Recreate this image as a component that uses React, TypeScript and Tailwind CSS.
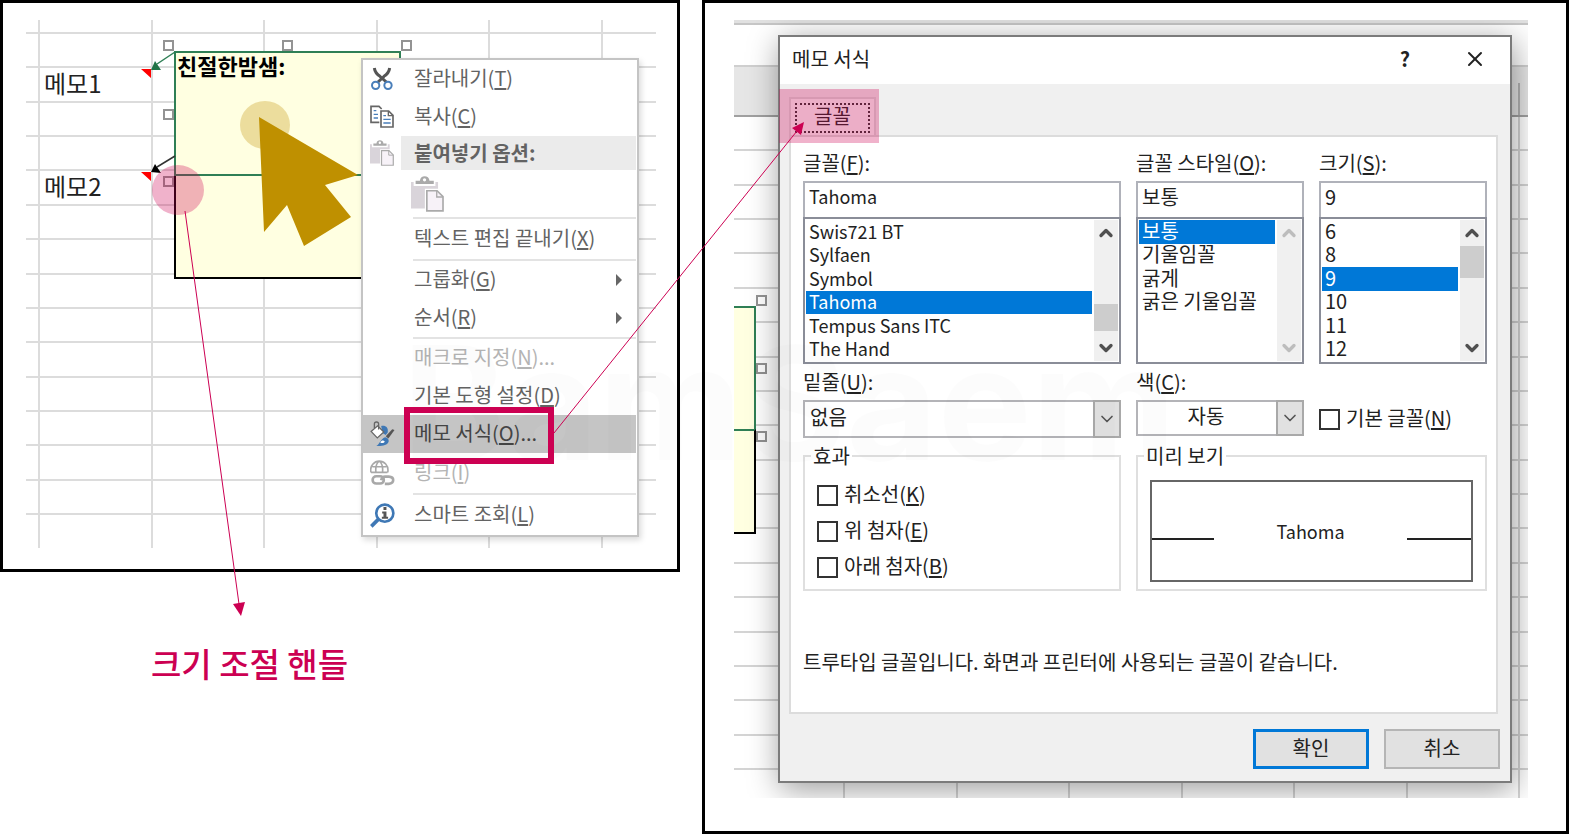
import type { ReactNode } from "react"
import { ChevronDown, ChevronUp, X } from "lucide-react"
import { clsx } from "clsx"

type MenuEntry = {
  label: string
  hotkey: string
  suffix?: string
  icon?: ReactNode
  disabled?: boolean
  active?: boolean
  submenu?: boolean
  tall?: boolean
}

const FONTS = ["Swis721 BT", "Sylfaen", "Symbol", "Tahoma", "Tempus Sans ITC", "The Hand"]
const STYLES = ["보통", "기울임꼴", "굵게", "굵은 기울임꼴"]
const SIZES = ["6", "8", "9", "10", "11", "12"]

function ScissorsIcon() {
  return (
    <svg viewBox="0 0 72 72" className="size-6" fill="none">
      <path d="M13 3c2 14 9 20 17 25l19 17M59 3c-2 14-9 20-17 25L24 45" stroke="#555" strokeWidth="9" />
      <circle cx="17" cy="55" r="11" stroke="#4a7fba" strokeWidth="6" />
      <circle cx="54" cy="55" r="11" stroke="#4a7fba" strokeWidth="6" />
    </svg>
  )
}

function CopyIcon() {
  return (
    <svg viewBox="0 0 72 72" className="size-6" fill="none">
      <path d="M28 52H3V4h24l8 8" stroke="#666" strokeWidth="5" />
      <path d="M11 17h8M11 28h13M11 39h13" stroke="#4a7fba" strokeWidth="4" />
      <path d="M33 18h23l13 13v35H33z" fill="#fff" stroke="#666" strokeWidth="5" />
      <path d="M55 18v14h14" stroke="#666" strokeWidth="4" />
      <path d="M40 32h8M40 43h22M40 54h22" stroke="#4a7fba" strokeWidth="4" />
    </svg>
  )
}

function PasteIcon({ className }: { className: string }) {
  return (
    <svg viewBox="0 0 100 108" className={className} fill="none">
      <path d="M0 18h8v12h66V18h8v80H0z" fill="#d9d4da" />
      <path d="M14 24V14h13C28-4 55-4 56 14h13v10z" fill="#aaa" />
      <circle cx="41" cy="11" r="5" fill="#fff" />
      <path d="M42 38h42l16 18v52H42z" fill="#fff" />
      <path d="M48 44h31l18 18v43H48z" fill="#f7f2f8" stroke="#aaa" strokeWidth="5" />
      <path d="M78 44v19h19" stroke="#aaa" strokeWidth="4" />
    </svg>
  )
}

function FormatIcon() {
  return (
    <svg viewBox="0 0 76 80" className="h-[26px] w-[25px]" fill="none">
      <path d="M34 15c16-2 22 6 20 20l-6 8-10-6z" fill="#3f78b5" />
      <path d="M75 28 56 54l-8-7 20-22z" fill="#555" />
      <path d="M46 50c8 2 12 6 11 13-4 12-20 15-38 14 10-5 12-21 27-27z" fill="#3f78b5" />
      <path d="m3 32 20-17 19 19-20 18z" fill="#fff" stroke="#666" strokeWidth="4" />
      <path d="M13 22V9c0-8 13-8 13 0v17" stroke="#666" strokeWidth="4" />
      <path d="M31 66c4-7 10-8 14-3-3 6-9 6-14 3z" fill="#fff" />
    </svg>
  )
}

function LinkIcon() {
  return (
    <svg viewBox="0 0 76 78" className="h-[26px] w-[25px]" fill="none" stroke="#a8a8a8" strokeWidth="5">
      <path d="M3 37C-2 17 14 3 28 3s30 12 26 34M3 37h50M7 20h43M18 37C16 20 20 9 28 3c8 6 12 17 10 34" />
      <rect x="8" y="49" width="34" height="22" rx="11" strokeWidth="8" />
      <path d="M34 61c2-8 6-11 12-11h11c18 1 18 20 0 22H45" strokeWidth="8" />
    </svg>
  )
}

function LookupIcon() {
  return (
    <svg viewBox="0 0 76 76" className="size-[25px]" fill="none">
      <path d="M26 49 4 71" stroke="#3f78b5" strokeWidth="11" />
      <circle cx="45" cy="31" r="26" fill="#fff" stroke="#3f78b5" strokeWidth="8" />
      <path d="M41 12h9v9h-9zM37 26h13v16h5v6H36v-6h5V32h-4z" fill="#555" />
    </svg>
  )
}

function MenuItem({ label, hotkey, suffix, icon, disabled, active, submenu, tall }: MenuEntry) {
  return (
    <button
      type="button"
      role="menuitem"
      disabled={disabled}
      className={clsx(
        "flex w-full items-center text-left",
        tall ? "h-10" : "h-[38px]",
        active ? "bg-[#c5c5c5] text-[#444]" : disabled ? "text-[#b4b4b4]" : "text-[#636363]"
      )}
    >
      <span className="flex w-[38px] shrink-0 justify-center">{icon}</span>
      <span className="flex-1 pb-[2px] pl-[13px] whitespace-nowrap">
        {label}(<u className="underline-offset-2">{hotkey}</u>){suffix}
      </span>
      {submenu && (
        <svg viewBox="0 0 6 12" className="mr-[14px] h-3 w-[6px]">
          <path d="M0 0l6 6-6 6z" fill="#666" />
        </svg>
      )}
    </button>
  )
}

function MenuLine() {
  return <hr className="ml-[50px] h-[2px] border-0 bg-[#e3e3e3]" />
}

function ContextMenu() {
  return (
    <div
      role="menu"
      className="absolute top-[38px] left-[335px] w-[278px] border-2 border-[#c4c4c4] bg-white pr-px text-xl leading-6 shadow-[2px_3px_6px_rgba(0,0,0,0.15)]"
    >
      <MenuItem label="잘라내기" hotkey="T" icon={<ScissorsIcon />} />
      <MenuItem label="복사" hotkey="C" icon={<CopyIcon />} />
      <div className="flex h-[34px] items-center text-[#636363]">
        <span className="flex w-[38px] justify-center">
          <PasteIcon className="h-[26px] w-6" />
        </span>
        <span className="flex h-full flex-1 items-center bg-[#ebebeb] pl-[13px] font-bold">붙여넣기 옵션:</span>
      </div>
      <div className="flex h-[47px] items-center pl-12">
        <button type="button" disabled aria-label="붙여넣기">
          <PasteIcon className="h-9 w-[33px]" />
        </button>
      </div>
      <MenuLine />
      <MenuItem label="텍스트 편집 끝내기" hotkey="X" tall />
      <MenuLine />
      <MenuItem label="그룹화" hotkey="G" submenu />
      <MenuItem label="순서" hotkey="R" submenu />
      <MenuLine />
      <MenuItem label="매크로 지정" hotkey="N" suffix="..." disabled />
      <MenuItem label="기본 도형 설정" hotkey="D" />
      <MenuItem label="메모 서식" hotkey="O" suffix="..." icon={<FormatIcon />} active />
      <MenuItem label="링크" hotkey="I" icon={<LinkIcon />} disabled tall />
      <MenuLine />
      <MenuItem label="스마트 조회" hotkey="L" icon={<LookupIcon />} tall />
    </div>
  )
}

function Handle({ className }: { className: string }) {
  return <span className={clsx("absolute size-[11px] border-2 border-[#939393] bg-white", className)} />
}

function LeftSheet() {
  const texts: Record<number, string> = { 15: "메모1", 36: "메모2" }
  return (
    <div className="relative h-[528px]">
      <div className="grid h-full grid-cols-[14px_repeat(5,1fr)_53px] grid-rows-[14px_repeat(14,1fr)_33px]">
        {Array.from({ length: 112 }).map((_, i) => (
          <div
            key={i}
            className={clsx(
              "flex min-h-0 items-center border-[#dcdcdc] pb-1 pl-1 text-2xl leading-6 text-[#222]",
              i % 7 !== 6 && "border-r-2",
              i < 105 && "border-b-2"
            )}
          >
            {texts[i]}
          </div>
        ))}
      </div>

      <div className="absolute top-[135px] left-[148px] h-[124px] w-[227px] border-2 border-black bg-[#ffffe1]" />
      <div className="absolute top-[31px] left-[148px] h-[125px] w-[227px] border-2 border-[#2f7f55] bg-[#ffffe1] pl-px text-[22px] leading-6 font-bold text-black">
        친절한밤샘:
      </div>
      <Handle className="top-5 left-[137px]" />
      <Handle className="top-5 left-[256px]" />
      <Handle className="top-5 left-[375px]" />
      <Handle className="top-[89px] left-[137px]" />
      <Handle className="top-[156px] left-[137px]" />
      <ContextMenu />
    </div>
  )
}

function RightSheet() {
  return (
    <div className="absolute inset-0">
      <div className="flex h-full flex-col">
        <div className="h-[5px] border-b-2 border-[#c6c6c6] bg-[#e1e1e1]" />
        <div className="h-[42px] border-b-2 border-[#cfcfcf]" />
        <div className="flex h-[50px] justify-end border-b-2 border-[#a0a0a0] bg-[#e6e6e6] pt-4">
          <div className="w-[10px] border-l-2 border-[#b4b4b4]" />
        </div>
        <div className="grid flex-1 grid-cols-[111px_repeat(6,1fr)_8px] grid-rows-[repeat(19,1fr)_28px]">
          {Array.from({ length: 160 }).map((_, i) => (
            <div
              key={i}
              className={clsx(
                "min-h-0 border-[#d4d4d4]",
                i % 8 > 0 && i % 8 < 7 && "border-r-2",
                i % 8 === 0 && i > 151 && "border-r-2",
                i < 152 && "border-b-2"
              )}
            />
          ))}
        </div>
      </div>
      <div className="absolute top-[286px] left-0 h-[124px] w-[22px] border-t-2 border-r-2 border-[#2f7f55] bg-[#ffffe1]" />
      <div className="absolute top-[409px] left-0 h-[105px] w-[22px] border-t-2 border-r-2 border-b-2 border-black border-t-[#2f7f55] bg-[#ffffe1]" />
      <Handle className="top-[275px] left-[22px]" />
      <Handle className="top-[343px] left-[22px]" />
      <Handle className="top-[411px] left-[22px]" />
    </div>
  )
}

type PickListProps = {
  id: string
  label: string
  hotkey: string
  options: string[]
  value: string
  thumb?: string
  latin?: boolean
}

function PickList({ id, label, hotkey, options, value, thumb, latin }: PickListProps) {
  const arrow = clsx("size-5", thumb ? "text-[#505050]" : "text-[#bdbdbd]")
  return (
    <div className="min-w-0">
      <label htmlFor={id} className="block h-[30px]">
        {label}(<u className="underline-offset-2">{hotkey}</u>):
      </label>
      <input
        id={id}
        defaultValue={value}
        className={clsx(
          "block h-9 w-full border-2 border-b-0 border-[#b0b2ba] bg-white px-1 pb-2 outline-none",
          latin && "text-lg"
        )}
      />
      <div className="flex h-[147px] border-2 border-[#8a8d98] bg-white p-px">
        <ul role="listbox" aria-label={label} className={clsx("flex flex-1 flex-col", latin && "text-lg")}>
          {options.map((option) => (
            <li
              key={option}
              role="option"
              aria-selected={option === value}
              className={clsx(
                "flex h-1/6 items-center pb-[2px] pl-[3px] leading-5 whitespace-nowrap",
                option === value && "bg-[#0078d7] text-white"
              )}
            >
              {option}
            </li>
          ))}
        </ul>
        <div className="ml-[2px] flex w-6 flex-col items-center bg-[#f0f0f0]">
          <button type="button" aria-label="위로" className="flex h-[26px] items-center">
            <ChevronUp className={arrow} strokeWidth={4} />
          </button>
          <div className="flex w-full flex-1 flex-col">
            {thumb && <div className={clsx("w-full bg-[#cdcdcd]", thumb)} />}
          </div>
          <button type="button" aria-label="아래로" className="flex h-[26px] items-center">
            <ChevronDown className={arrow} strokeWidth={4} />
          </button>
        </div>
      </div>
    </div>
  )
}

type ComboProps = { id: string; label: string; hotkey: string; value: string; center?: boolean }

function Combo({ id, label, hotkey, value, center }: ComboProps) {
  return (
    <div className="min-w-0">
      <label htmlFor={id} className="block h-[30px]">
        {label}(<u className="underline-offset-2">{hotkey}</u>):
      </label>
      <div className="relative">
        <select
          id={id}
          className={clsx(
            "block w-full appearance-none border-2 border-[#b4b4b8] bg-white pb-1 outline-none",
            center ? "h-9 pr-7 text-center" : "h-[38px] pl-[5px]"
          )}
        >
          <option>{value}</option>
        </select>
        <span className="pointer-events-none absolute inset-y-0 right-0 flex w-7 items-center justify-center border-2 border-[#a9a9a9] bg-[#e1e1e1]">
          <ChevronDown className="size-5 text-[#555]" strokeWidth={2} />
        </span>
      </div>
    </div>
  )
}

function Check({ label, hotkey }: { label: string; hotkey: string }) {
  return (
    <label className="flex h-9 items-center gap-[6px] whitespace-nowrap">
      <input type="checkbox" className="size-[21px] shrink-0 appearance-none border-2 border-[#333] bg-white" />
      <span className="pb-[2px]">
        {label}(<u className="underline-offset-2">{hotkey}</u>)
      </span>
    </label>
  )
}

function FormatDialog() {
  return (
    <div
      role="dialog"
      aria-label="메모 서식"
      className="relative mt-[15px] mr-4 mb-[15px] ml-11 flex flex-1 flex-col border-2 border-[#7b7b7b] bg-[#f0f0f0] text-xl leading-6 text-[#222] shadow-[2px_6px_30px_rgba(0,0,0,0.4)]"
    >
      <header className="flex h-[47px] items-center justify-between bg-white pr-[23px] pb-1 pl-3">
        <h2>메모 서식</h2>
        <div className="flex items-center gap-[53px]">
          <button type="button" aria-label="도움말" className="font-bold">
            ?
          </button>
          <button type="button" aria-label="닫기">
            <X className="size-6" strokeWidth={2} />
          </button>
        </div>
      </header>

      <div role="tablist" className="mt-[13px] flex pl-[9px]">
        <button
          type="button"
          role="tab"
          aria-selected
          className="h-[38px] w-[87px] border-2 border-b-0 border-[#dcdcdc] bg-[#f9f9f9] px-1 pt-1 pb-[5px]"
        >
          <span className="flex h-[30px] items-center justify-center border-2 border-dotted border-[#333] pb-1">
            글꼴
          </span>
        </button>
      </div>

      <form className="mx-[9px] mr-3 flex h-[579px] flex-col border-2 border-[#dcdcdc] bg-white pt-[14px] pr-[9px] pl-3">
        <div className="grid grid-cols-[318fr_168fr_168fr] gap-[15px]">
          <PickList
            id="font"
            label="글꼴"
            hotkey="F"
            options={FONTS}
            value="Tahoma"
            thumb="mt-auto mb-1 h-[27px]"
            latin
          />
          <PickList id="style" label="글꼴 스타일" hotkey="O" options={STYLES} value="보통" />
          <PickList id="size" label="크기" hotkey="S" options={SIZES} value="9" thumb="h-8" />
        </div>
        <div className="mt-[6px] grid grid-cols-[318fr_168fr_168fr] gap-[15px]">
          <Combo id="underline" label="밑줄" hotkey="U" value="없음" />
          <Combo id="color" label="색" hotkey="C" value="자동" center />
          <div className="pt-[31px]">
            <Check label="기본 글꼴" hotkey="N" />
          </div>
        </div>
        <div className="mt-[6px] grid grid-cols-[318fr_351fr] gap-[15px]">
          <fieldset className="h-[147px] border-2 border-[#dfdfdf] px-3 pt-[9px]">
            <legend className="-ml-[6px] px-[2px]">효과</legend>
            <Check label="취소선" hotkey="K" />
            <Check label="위 첨자" hotkey="E" />
            <Check label="아래 첨자" hotkey="B" />
          </fieldset>
          <fieldset className="h-[147px] border-2 border-[#dfdfdf] px-3 pt-3">
            <legend className="-ml-[6px] px-[2px]">미리 보기</legend>
            <div className="flex h-[102px] items-center justify-between border-2 border-[#666]">
              <span className="mt-4 h-[2px] w-[62px] bg-[#222]" />
              <span className="text-lg">Tahoma</span>
              <span className="mt-4 h-[2px] w-[64px] bg-[#222]" />
            </div>
          </fieldset>
        </div>
        <p className="mt-[59px] whitespace-nowrap">
          트루타입 글꼴입니다. 화면과 프린터에 사용되는 글꼴이 같습니다.
        </p>
      </form>

      <footer className="mt-[15px] mr-[10px] flex justify-end gap-[15px]">
        <button type="button" className="h-10 w-[116px] border-3 border-[#0078d7] bg-[#e1e1e1] pb-[2px]">
          확인
        </button>
        <button type="button" className="h-10 w-[116px] border-2 border-[#b5b5b5] bg-[#e1e1e1] pb-[2px]">
          취소
        </button>
      </footer>
    </div>
  )
}

// Arrows, pointer and highlights drawn across both panels
function Annotations() {
  return (
    <svg className="pointer-events-none absolute top-0 left-0" width="1569" height="834" fill="none">
      <text x="402" y="460" fontSize="158" fontWeight="700" fontFamily="Inter, sans-serif" fill="#000" fillOpacity="0.012">
        BamSaem
      </text>
      <path d="M141 69h10v9zM141 172h10v9z" fill="#f00" />
      <path d="M175 52l-18 12" stroke="#2f7f55" strokeWidth="1.5" />
      <path d="M151 70l4-9 6 9z" fill="#217346" />
      <path d="M175 156l-18 11" stroke="#333" strokeWidth="1.5" />
      <path d="M151 172l4-8 6 9z" fill="#000" />

      <ellipse cx="265" cy="125" rx="25" ry="24" fill="#bf9000" fillOpacity="0.3" />
      <path d="M259 117l99 58-33 10 26 32-47 29-17-41-23 27z" fill="#bf9000" />

      <ellipse cx="178" cy="190" rx="26" ry="25" fill="#cc0052" fillOpacity="0.3" />
      <path d="M185 211l54 393" stroke="#cc0052" />
      <path d="M233 604l12-2-4 14z" fill="#cc0052" />

      <rect x="407" y="410" width="144" height="51" stroke="#cc0052" strokeWidth="6" />
      <path d="M554 433L797 131" stroke="#cc0052" />
      <path d="M804 122l-12 6 9 7z" fill="#cc0052" />
      <rect x="779" y="89" width="100" height="54" fill="#cc0052" fillOpacity="0.3" />
    </svg>
  )
}

export default function App() {
  return (
    <main className="relative grid min-h-screen grid-cols-[680fr_867fr] gap-[22px] bg-white font-['Noto_Sans_CJK_KR',sans-serif]">
      <figure>
        <div className="border-3 border-black pt-[17px] pr-[21px] pb-[21px] pl-[23px]">
          <LeftSheet />
        </div>
        <figcaption className="mt-[71px] pl-[151px] text-[33px] leading-10 font-medium text-[#cc0052]">
          크기 조절 핸들
        </figcaption>
      </figure>
      <section className="flex flex-col border-3 border-black pt-[17px] pr-[38px] pb-[33px] pl-[29px]">
        <div className="relative flex flex-1 flex-col overflow-hidden">
          <RightSheet />
          <FormatDialog />
        </div>
      </section>
      <Annotations />
    </main>
  )
}
